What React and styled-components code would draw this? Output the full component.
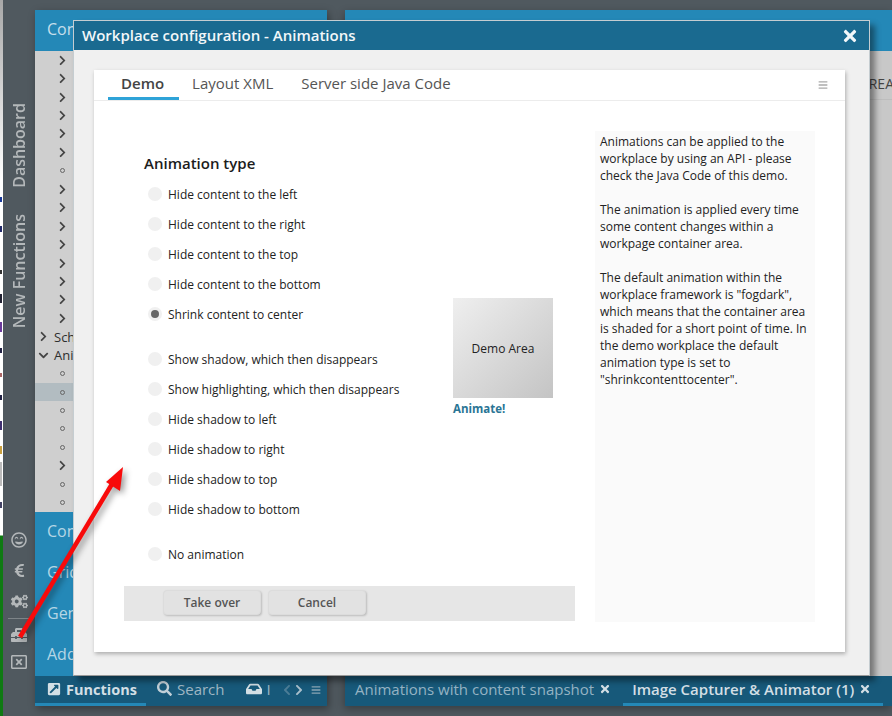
import React from "react";
import styled, { createGlobalStyle } from "styled-components";
import {
  FaChevronRight, FaChevronDown, FaChevronLeft, FaRegGrinBeam, FaEuroSign, FaCogs, FaToolbox,
  FaRegWindowClose, FaExternalLinkSquareAlt, FaSearch, FaInbox, FaTimes, FaBars,
} from "react-icons/fa";

const Global = createGlobalStyle`
  html, body { margin: 0; padding: 0; background: #50595f; }
  * { box-sizing: border-box; }
  body { font-family: "Open Sans", "Liberation Sans", sans-serif; }
`;

const Page = styled.div`
  position: relative; width: 892px; height: 716px; overflow: hidden;
  display: flex; background: #50595f;
`;
const Strip = styled.div`
  width: 3px; height: 716px; flex: none; display: flex; flex-direction: column;
  background: linear-gradient(#a8a8a8 0, #d8d8d8 100px, #fff 180px, #fff 535px, #0f7a12 536px, #0f7a12 100%);
`;
const Speck = styled.span`
  display: block; width: 2px; height: ${p => p.$h}px; margin-top: ${p => p.$t}px; background: ${p => p.$c};
`;
const Sidebar = styled.nav`
  width: 32px; flex: none; display: flex; flex-direction: column; align-items: center;
  padding: 103px 0 46px; color: #b4b8ba;
`;
const VText = styled.div`
  writing-mode: vertical-rl; transform: rotate(180deg); font-size: 16px; font-weight: 600;
  line-height: 20px; margin-bottom: 26px;
`;
const SideIcons = styled.div`
  margin-top: auto; display: flex; flex-direction: column; align-items: center; gap: 15px;
  width: 100%; color: #b4b8ba;
`;
const SideRule = styled.div`
  width: 23px; height: 1px; background: #7d8488; margin: -7px 0;
`;
const CloseSquare = styled(FaRegWindowClose)`
  margin-top: -4px;
`;
const Panels = styled.div`
  flex: 1; display: flex; gap: 18px; padding: 10px 0;
`;
const LeftPanel = styled.section`
  width: 292px; flex: none; display: flex; flex-direction: column; box-shadow: 2px 3px 8px rgba(0,0,0,.35);
`;
const RightPanel = styled.section`
  flex: 1; display: flex; flex-direction: column; box-shadow: -1px 3px 8px rgba(0,0,0,.3);
`;
const PanelHead = styled.header`
  height: 41px; flex: none; background: #2488b7; color: #c6dfeb; font-size: 16px;
  display: flex; align-items: center; padding: 0 0 3px 12px; font-weight: 400;
`;
const Tree = styled.div`
  flex: 1; background: #cfcfcf; display: flex; flex-direction: column;
`;
const TreeRow = styled.div`
  height: 18.44px; flex: none; display: flex; align-items: center;
  padding-left: ${p => (p.$top ? 3 : 22)}px; background: ${p => (p.$sel ? "#b2bcc1" : "transparent")};
  font-size: 13px; gap: 5px; white-space: nowrap; overflow: hidden; color: #2e2e2e;
`;
const Dot = styled.span`
  width: 5px; height: 5px; border-radius: 50%; border: 1px solid #666; margin-left: 3px;
`;
const Chevron = styled.span`
  display: flex; color: #444; width: 11px;
`;
const Accordion = styled.div`
  flex: none; background: #2488b7; display: flex; flex-direction: column;
`;
const AccRow = styled.div`
  height: 41px; color: #b5d6e5; font-size: 16px; display: flex; align-items: center; padding: 0 0 3px 12px;
`;
const BottomBar = styled.footer`
  height: 30px; flex: none; background: #17597a; display: flex; align-items: center;
  color: #9fb6c3; font-size: 15px; white-space: nowrap;
`;
const FnTab = styled.div`
  width: 111px; height: 100%; padding: 0 0 1px 12px; display: flex; align-items: center; gap: 5px;
  color: #d3dfe5; font-weight: 700; font-size: 14.5px; border-bottom: 3px solid #2488b7;
`;
const Tool = styled.div`
  display: flex; align-items: center; gap: 5px; margin-left: ${p => p.$ml}px; padding-bottom: 5px;
`;
const Nav = styled.div`
  display: flex; align-items: center; margin-left: 10px; padding-bottom: 3px; color: #5f8aa1;
`;
const Pane = styled.div`
  flex: 1; background: #c8c8c8; display: flex; flex-direction: column;
`;
const PaneTop = styled.div`
  height: 49px; border-bottom: 1px solid #bdbdbd; display: flex; align-items: center;
  justify-content: flex-end; padding: 17px 0 0; margin-right: -2px; font-size: 14px; color: #444; overflow: hidden;
`;
const TabItem = styled.div`
  height: 100%; display: flex; align-items: center; gap: 5px; flex: none;
  padding: 0 12px 2px ${p => (p.$on ? 9 : 10)}px;
  color: ${p => (p.$on ? "#d3dfe5" : "#95b3c3")}; font-weight: ${p => (p.$on ? 600 : 400)};
  border-bottom: 3px solid ${p => (p.$on ? "#2488b7" : "transparent")};
  & > svg { color: #d3dfe5; }
`;
const Modal = styled.div`
  position: absolute; left: 73px; top: 20px; width: 797px; height: 656px; background: #f0f0f0;
  border: 1px solid #c5cdd1; border-bottom-color: #999; display: flex; flex-direction: column;
  box-shadow: 5px 5px 6px rgba(0,0,0,.42);
`;
const ModalHead = styled.header`
  height: 29px; flex: none; background: #1a6a90; color: #f2f7f9; display: flex; align-items: center;
  justify-content: space-between; padding: 0 10px 2px 8px; font-size: 15px; font-weight: 600;
`;
const ModalClose = styled(FaTimes)`
  margin-top: 2px;
`;
const ModalBody = styled.div`
  flex: 1; padding: 20px 24px 23px 20px; display: flex;
`;
const Card = styled.div`
  flex: 1; background: #fff; display: flex; flex-direction: column; box-shadow: 1px 2px 4px rgba(0,0,0,.28);
`;
const TabBar = styled.div`
  height: 31px; flex: none; border-bottom: 1px solid #ececec; display: flex; align-items: stretch;
  padding: 0 17px 0 14px; color: #555; font-size: 15px;
`;
const Tab = styled.div`
  padding: 0 ${p => (p.$on ? 15 : 13)}px 2px 13px; height: 30px; display: flex; align-items: center;
  margin-right: ${p => p.$mr || 0}px;
  font-weight: ${p => (p.$on ? 600 : 400)}; color: ${p => (p.$on ? "#444" : "#555")};
  border-bottom: 3px solid ${p => (p.$on ? "#2ea3d8" : "transparent")}; white-space: nowrap;
`;
const TabMenu = styled.div`
  margin-left: auto; display: flex; align-items: center; color: #aaa;
`;
const CardBody = styled.div`
  flex: 1; display: flex; gap: 20px; padding: 30px;
`;
const FormCol = styled.div`
  width: 451px; flex: none; display: flex; flex-direction: column;
`;
const FormMain = styled.div`
  flex: 1; display: flex; padding: 21px 0 0 20px;
`;
const Options = styled.div`
  width: 309px; flex: none; display: flex; flex-direction: column;
`;
const Title = styled.h3`
  margin: 0 0 5px; font-size: 15px; line-height: 22px; font-weight: 600; color: #1c1c1c;
`;
const Row = styled.label`
  height: 30px; flex: none; display: flex; align-items: center; gap: 6px; padding-left: 4px;
  margin-top: ${p => p.$gap || 0}px; font-size: 12px; color: #222;
`;
const Radio = styled.span`
  width: 14px; height: 14px; border-radius: 50%; background: #f0f0f0; flex: none;
  display: flex; align-items: center; justify-content: center;
  &::after { content: ""; width: 8px; height: 8px; border-radius: 50%; background: ${p => (p.$on ? "#666" : "transparent")}; }
`;
const DemoCol = styled.div`
  padding-top: 146px; display: flex; flex-direction: column;
`;
const DemoArea = styled.div`
  width: 100px; height: 100px; background: linear-gradient(135deg, #efefef, #c4c4c4);
  display: flex; align-items: center; justify-content: center; font-size: 12px; color: #222;
`;
const Animate = styled.a`
  margin-top: 3px; font-size: 11.5px; line-height: 16px; font-weight: 700; color: #2a7595;
`;
const ButtonBar = styled.div`
  height: 35px; flex: none; background: #e6e6e6; margin-bottom: 1px; padding: 4px 0 0 39px;
  display: flex; gap: 7px; align-items: flex-start;
`;
const Btn = styled.button`
  width: 98px; height: 25px; border: 1px solid #dcdcdc; border-radius: 4px; background: #e2e2e2;
  box-shadow: 1px 1px 2px rgba(0,0,0,.18); color: #555; font: 600 12px "Open Sans", sans-serif; padding: 0;
`;
const Info = styled.aside`
  flex: 1; background: #fafafa; padding: 2px 5px; font-size: 12px; line-height: 17px; color: #222;
  p { margin: 0 0 17px; }
`;
const Arrow = styled.svg`
  position: absolute; left: 0; top: 0; pointer-events: none; filter: drop-shadow(3px 3px 3px rgba(0,0,0,.4));
`;

const tree = "cccccc.cccccccc".split("");
const labels1 = ["Hide content to the left", "Hide content to the right", "Hide content to the top", "Hide content to the bottom"];
const labels2 = ["Show highlighting, which then disappears", "Hide shadow to left", "Hide shadow to right", "Hide shadow to top", "Hide shadow to bottom"];

const Node = ({ kind }) => (
  <TreeRow>
    {kind === "c" ? <Chevron><FaChevronRight size={11} /></Chevron> : <Dot />}
  </TreeRow>
);

export default function App() {
  return (
    <Page>
      <Global />
      <Strip>
        <Speck $t={197} $h={5} $c="#1a3a9a" />
        <Speck $t={24} $h={6} $c="#222a6a" />
        <Speck $t={38} $h={4} $c="#333" />
        <Speck $t={20} $h={9} $c="#223" />
        <Speck $t={19} $h={10} $c="#6a3a9a" />
        <Speck $t={16} $h={5} $c="#224" />
        <Speck $t={20} $h={4} $c="#a66" />
        <Speck $t={18} $h={5} $c="#224" />
        <Speck $t={21} $h={9} $c="#403070" />
        <Speck $t={16} $h={8} $c="#c9a040" />
        <Speck $t={8} $h={24} $c="#bbb" />
        <Speck $t={16} $h={6} $c="#446" />
      </Strip>
      <Sidebar>
        <VText>Dashboard</VText>
        <VText>New Functions</VText>
        <SideIcons>
          <FaRegGrinBeam size={16} />
          <FaEuroSign size={15} />
          <FaCogs size={17} />
          <SideRule />
          <FaToolbox size={16} />
          <CloseSquare size={16} />
        </SideIcons>
      </Sidebar>
      <Panels>
        <LeftPanel>
          <PanelHead>Con</PanelHead>
          <Tree>
            {tree.map((k, i) => <Node key={i} kind={k} />)}
            <TreeRow $top><Chevron><FaChevronRight size={11} /></Chevron>Sch</TreeRow>
            <TreeRow $top><Chevron><FaChevronDown size={11} /></Chevron>Ani</TreeRow>
            <TreeRow><Dot /></TreeRow>
            <TreeRow $sel><Dot /></TreeRow>
            <TreeRow><Dot /></TreeRow>
            <TreeRow><Dot /></TreeRow>
            <TreeRow><Dot /></TreeRow>
            <Node kind="c" />
            <TreeRow><Dot /></TreeRow>
            <TreeRow><Dot /></TreeRow>
          </Tree>
          <Accordion>
            <AccRow>Con</AccRow>
            <AccRow>Grid</AccRow>
            <AccRow>Gen</AccRow>
            <AccRow>Add</AccRow>
          </Accordion>
          <BottomBar>
            <FnTab><FaExternalLinkSquareAlt size={14} />Functions</FnTab>
            <Tool $ml={11}><FaSearch size={15} color="#c2d0d8" />Search</Tool>
            <Tool $ml={21}><FaInbox size={16} color="#d3dfe5" />I</Tool>
            <Nav>
              <FaChevronLeft size={12} color="#4c7d96" />
              <FaChevronRight size={12} color="#a9bfcb" />
              <FaBars size={10} color="#8aa5b4" style={{ marginLeft: 6 }} />
            </Nav>
          </BottomBar>
        </LeftPanel>
        <RightPanel>
          <PanelHead />
          <Pane>
            <PaneTop>REA</PaneTop>
          </Pane>
          <BottomBar>
            <TabItem>Animations with content snapshot<FaTimes size={12} /></TabItem>
            <TabItem $on>Image Capturer &amp; Animator (1)<FaTimes size={12} /></TabItem>
          </BottomBar>
        </RightPanel>
      </Panels>
      <Modal>
        <ModalHead>
          Workplace configuration - Animations
          <ModalClose size={18} />
        </ModalHead>
        <ModalBody>
          <Card>
            <TabBar>
              <Tab $on>Demo</Tab>
              <Tab $mr={2}>Layout XML</Tab>
              <Tab>Server side Java Code</Tab>
              <TabMenu><FaBars size={10} /></TabMenu>
            </TabBar>
            <CardBody>
              <FormCol>
                <FormMain>
                  <Options>
                    <Title>Animation type</Title>
                    {labels1.map(l => <Row key={l}><Radio />{l}</Row>)}
                    <Row><Radio $on />Shrink content to center</Row>
                    <Row $gap={15}><Radio />Show shadow, which then disappears</Row>
                    {labels2.map(l => <Row key={l}><Radio />{l}</Row>)}
                    <Row $gap={15}><Radio />No animation</Row>
                  </Options>
                  <DemoCol>
                    <DemoArea>Demo Area</DemoArea>
                    <Animate>Animate!</Animate>
                  </DemoCol>
                </FormMain>
                <ButtonBar>
                  <Btn>Take over</Btn>
                  <Btn>Cancel</Btn>
                </ButtonBar>
              </FormCol>
              <Info>
                <p>Animations can be applied to the workplace by using an API - please check the Java Code of this demo.</p>
                <p>The animation is applied every time some content changes within a workpage container area.</p>
                <p>The default animation within the workplace framework is "fogdark", which means that the container area is shaded for a short point of time. In the demo workplace the default animation type is set to "shrinkcontenttocenter".</p>
              </Info>
            </CardBody>
          </Card>
        </ModalBody>
      </Modal>
      <Arrow width="892" height="716" viewBox="0 0 892 716">
        <line x1="20" y1="637" x2="112" y2="484" stroke="#f80a0a" strokeWidth="4.5" />
        <polygon points="123,467 106,482 120,491" fill="#f80a0a" />
      </Arrow>
    </Page>
  );
}
